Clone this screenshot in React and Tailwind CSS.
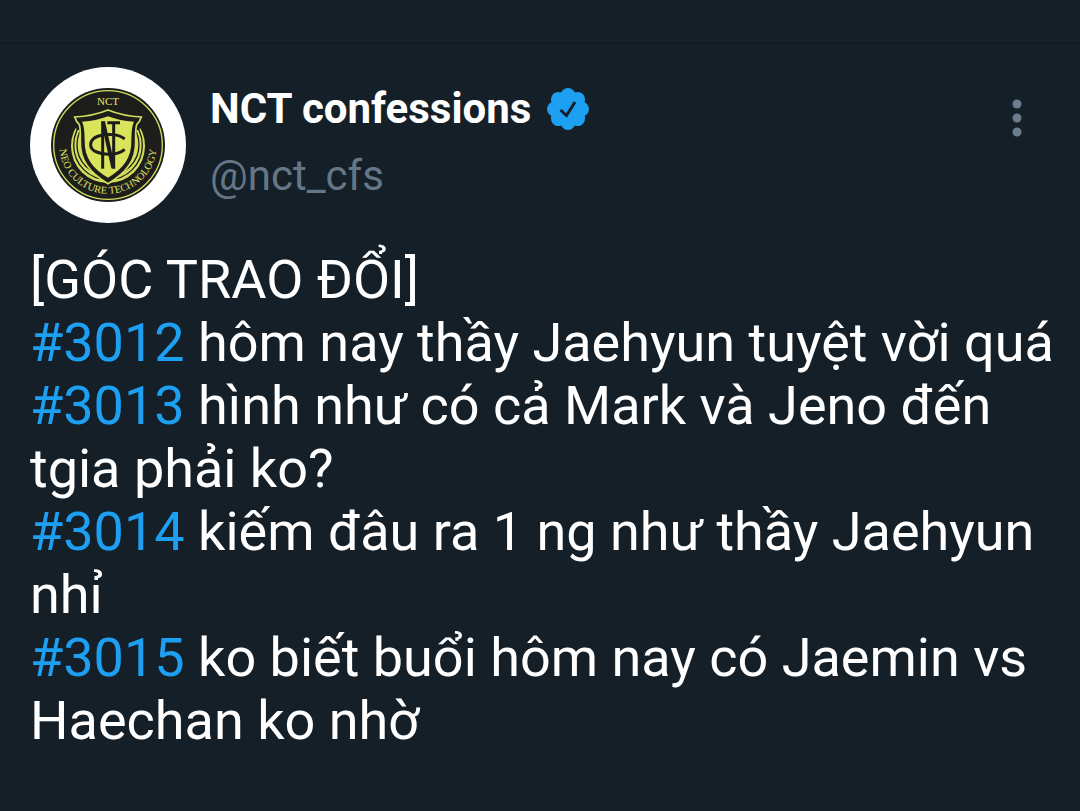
const posts = [
  { text: '[GÓC TRAO ĐỔI]' },
  { tag: '#3012', text: 'hôm nay thầy Jaehyun tuyệt vời quá' },
  { tag: '#3013', text: 'hình như có cả Mark và Jeno đến tgia phải ko?' },
  { tag: '#3014', text: 'kiếm đâu ra 1 ng như thầy Jaehyun nhỉ' },
  { tag: '#3015', text: 'ko biết buổi hôm nay có Jaemin vs Haechan ko nhờ' },
];

function Avatar() {
  return (
    <svg viewBox="30 21 468 468" className="size-39 shrink-0" role="img" aria-label="NCT confessions">
      <defs>
        <path id="motto" d="M118 235 V255 A146 146 0 0 0 410 255 V235" />
      </defs>
      <circle cx="264" cy="255" r="234" fill="#fff" />
      <circle cx="264" cy="255" r="171" fill="#1d1d1b" />
      <circle cx="264" cy="255" r="163" fill="none" stroke="#d3df5c" strokeWidth="4" />
      <circle cx="264" cy="258" r="111" fill="#d3df5c" />
      <circle cx="264" cy="256" r="103" fill="none" stroke="#1d1d1b" strokeWidth="4" />
      <circle cx="264" cy="254" r="93" fill="none" stroke="#1d1d1b" strokeWidth="4" />
      <path d="M150 145H378V180H366L358 210H170L162 180H150Z" fill="#1d1d1b" />
      <path d="M164 171 Q220 168 264 150 Q308 168 364 171 Q360 184 350 194 Q346 210 347 242 C349 300 320 338 264 371 C208 338 179 300 181 242 Q182 210 178 194 Q168 184 164 171Z" fill="#1d1d1b" stroke="#d3df5c" strokeWidth="5" />
      <path d="M186 185 Q228 183 264 169 Q300 183 342 185 Q334 200 334 242 C335 293 310 326 264 353 C218 326 193 293 194 242 Q194 200 186 185Z" fill="#d9e45c" />
      <g fill="none" stroke="#1d1d1b" strokeWidth="9">
        <path d="M248 326V184" />
        <path d="M249 184L280 324" strokeWidth="12" />
        <path d="M281 326V188M262 188H300" />
        <path d="M314 237 C296 222 262 220 236 228 C206 238 204 266 230 276 C258 288 296 284 314 268" />
      </g>
      <g fill="#e0ea6a" fontFamily="'Liberation Serif', serif">
        <text x="264" y="135" fontSize="33" textAnchor="middle">NCT</text>
        <text fontSize="31" textAnchor="middle">
          <textPath href="#motto" startOffset="50%">NEO CULTURE TECHNOLOGY</textPath>
        </text>
      </g>
    </svg>
  );
}

function VerifiedBadge() {
  return (
    <svg viewBox="0 0 42 42" className="size-[42px] shrink-0" role="img" aria-label="Verified">
      <g fill="#1d9ff2">
        <circle cx="21" cy="21" r="16" />
        <circle cx="21" cy="7.5" r="7.5" />
        <circle cx="30.6" cy="11.4" r="7.5" />
        <circle cx="34.5" cy="21" r="7.5" />
        <circle cx="30.6" cy="30.6" r="7.5" />
        <circle cx="21" cy="34.5" r="7.5" />
        <circle cx="11.4" cy="30.6" r="7.5" />
        <circle cx="7.5" cy="21" r="7.5" />
        <circle cx="11.4" cy="11.4" r="7.5" />
      </g>
      <path d="M13.5 22 L19.5 27.5 L28 14" fill="none" stroke="#15202b" strokeWidth="3" />
    </svg>
  );
}

export default function App() {
  return (
    <div className="min-h-screen bg-[#141f28] font-['Roboto',sans-serif] text-white">
      <div className="h-11 border-b-2 border-[#101a22]" />
      <article className="px-[30px] pt-[23px] pb-8">
        <header className="flex gap-6">
          <Avatar />
          <div className="min-w-0 flex-1 pt-3">
            <div className="flex items-center gap-4">
              <h1 className="text-[42px] leading-[60px] font-bold">NCT confessions</h1>
              <VerifiedBadge />
            </div>
            <p className="pt-2 text-[42px] leading-[58px] text-[#657786]">@nct_cfs</p>
          </div>
          <button type="button" aria-label="More options" className="mt-8 mr-7 self-start">
            <svg viewBox="0 0 10 38" className="h-[38px] w-[10px]" fill="#6b7d8c">
              <circle cx="5" cy="5" r="4.5" />
              <circle cx="5" cy="19" r="4.5" />
              <circle cx="5" cy="33" r="4.5" />
            </svg>
          </button>
        </header>
        <div className="-mr-4 pt-[25px] text-[54px] leading-[63px]">
          {posts.map((post) => (
            <p key={post.text}>
              {post.tag && (
                <>
                  <a href={post.tag} className="text-[#1d9ff2]">{post.tag}</a>{' '}
                </>
              )}
              {post.text}
            </p>
          ))}
        </div>
      </article>
    </div>
  );
}
